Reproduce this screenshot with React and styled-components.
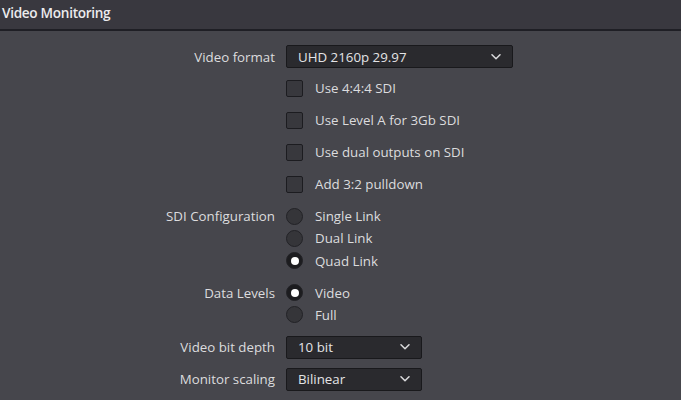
import React from "react";
import styled, { createGlobalStyle } from "styled-components";

const Global = createGlobalStyle`
  html, body { margin: 0; padding: 0; background: #46464c; }
  body { font-family: "Open Sans", "Noto Sans", sans-serif; color: #d6d6d8; }
  * { box-sizing: border-box; }
`;

const Page = styled.div`
  width: 681px;
  height: 400px;
  background: #46464c;
  overflow: hidden;
  display: flex;
  flex-direction: column;
`;

const Header = styled.div`
  height: 31px;
  background: #39383f;
  border-bottom: 2px solid #1f1f25;
  display: flex;
  align-items: center;
  padding: 0 0 4px 2px;
  font-size: 13.6px;
  font-weight: 600;
  color: #ececee;
  letter-spacing: -0.3px;
`;

const Form = styled.div`
  display: grid;
  grid-template-columns: 275px 1fr;
  column-gap: 11px;
  padding-top: 14px;
  align-items: start;
`;

const Label = styled.div`
  text-align: right;
  font-size: 13.3px;
  line-height: 16px;
  height: ${p => p.$h || 23}px;
  display: flex;
  align-items: center;
  justify-content: flex-end;
  margin-top: ${p => p.$mt || 0}px;
  color: #dcdcde;
  white-space: nowrap;
`;

const Controls = styled.div`
  display: flex;
  flex-direction: column;
  margin-top: ${p => p.$mt || 0}px;
`;

const Select = styled.div`
  width: ${p => p.$w}px;
  height: 23px;
  background: #2a2a2e;
  border: 1px solid #19191c;
  border-radius: 2px;
  display: flex;
  align-items: center;
  justify-content: space-between;
  padding: 0 11px 0 11px;
  font-size: 13.3px;
  color: #e4e4e6;
`;

const Row = styled.label`
  display: flex;
  align-items: center;
  gap: 12px;
  height: ${p => p.$h}px;
  font-size: 13.3px;
  color: #dcdcde;
  white-space: nowrap;
`;

const Box = styled.span`
  width: 17px;
  height: 17px;
  border: 1px solid #1c1c20;
  border-radius: 2px;
  background: #38383d;
  flex: none;
`;

const Radio = styled.span`
  width: 17px;
  height: 17px;
  border-radius: 50%;
  flex: none;
  border: 1px solid #222226;
  background: ${p => (p.$on ? "#1c1c1f" : "#353539")};
  display: flex;
  align-items: center;
  justify-content: center;
  &::after {
    content: "";
    display: ${p => (p.$on ? "block" : "none")};
    width: 8px;
    height: 8px;
    border-radius: 50%;
    background: #ffffff;
  }
`;

const Chevron = () => (
  <svg width="10" height="6" viewBox="0 0 10 6">
    <path d="M1 0.8 L5 4.8 L9 0.8" fill="none" stroke="#dcdcde" strokeWidth="1.5" strokeLinecap="round" strokeLinejoin="round" />
  </svg>
);

export default function App() {
  return (
    <>
      <Global />
      <Page>
        <Header>Video Monitoring</Header>
        <Form>
          <Label>Video format</Label>
          <Select $w={227}>
            <span>UHD 2160p 29.97</span>
            <Chevron />
          </Select>

          <div />
          <Controls $mt={4}>
            <Row $h={32}><Box />Use 4:4:4 SDI</Row>
            <Row $h={32}><Box />Use Level A for 3Gb SDI</Row>
            <Row $h={32}><Box />Use dual outputs on SDI</Row>
            <Row $h={32}><Box />Add 3:2 pulldown</Row>
          </Controls>

          <Label $h={22} $mt={5}>SDI Configuration</Label>
          <Controls $mt={5}>
            <Row $h={22.3}><Radio />Single Link</Row>
            <Row $h={22.3}><Radio />Dual Link</Row>
            <Row $h={22.3}><Radio $on />Quad Link</Row>
          </Controls>

          <Label $h={22} $mt={10}>Data Levels</Label>
          <Controls $mt={10}>
            <Row $h={22}><Radio $on />Video</Row>
            <Row $h={22}><Radio />Full</Row>
          </Controls>

          <Label $mt={10}>Video bit depth</Label>
          <Controls $mt={10}>
            <Select $w={136}>
              <span>10 bit</span>
              <Chevron />
            </Select>
          </Controls>

          <Label $mt={9}>Monitor scaling</Label>
          <Controls $mt={9}>
            <Select $w={136}>
              <span>Bilinear</span>
              <Chevron />
            </Select>
          </Controls>
        </Form>
      </Page>
    </>
  );
}
